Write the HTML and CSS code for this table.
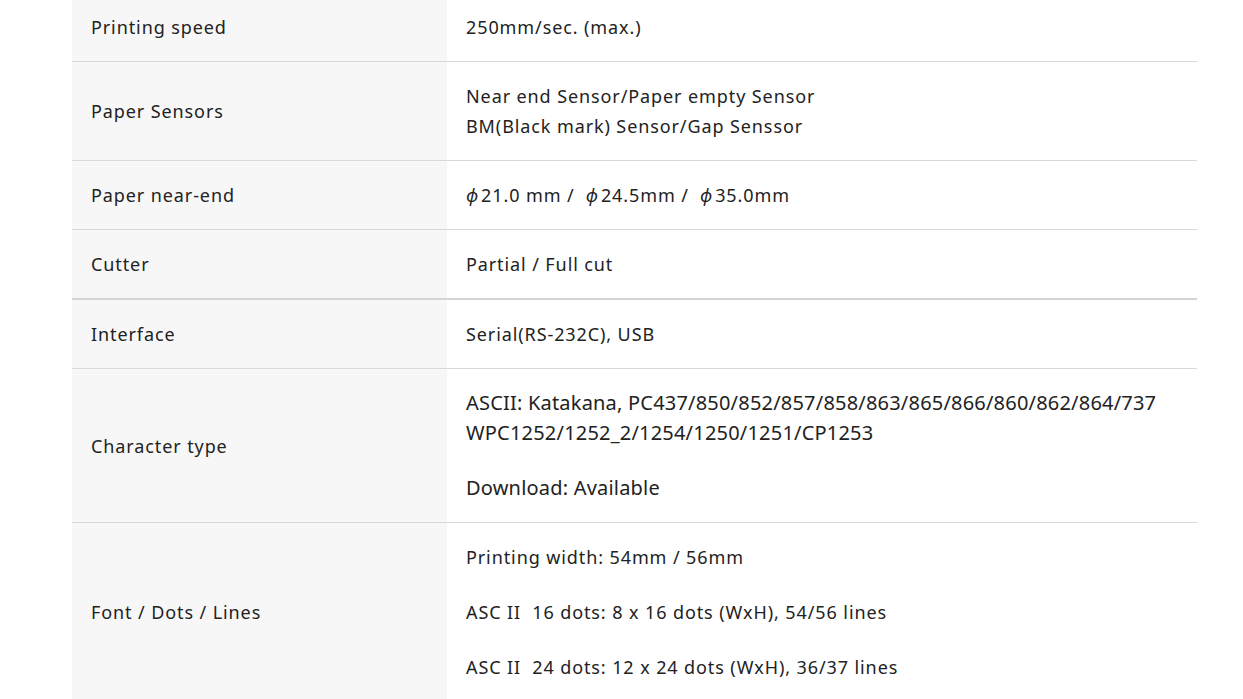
FILE: index.html
```html
<!DOCTYPE html>
<html lang="en">
<head>
    <meta charset="UTF-8">
    <meta name="viewport" content="width=device-width, initial-scale=1.0">
    <title>Specifications</title>
    <link rel="stylesheet" href="styles.css">
</head>
<body>
    <div class="spec">
        <table class="spec-table">
            <tr>
                <th>Printing speed</th>
                <td>250mm/sec. (max.)</td>
            </tr>
            <tr>
                <th>Paper Sensors</th>
                <td>Near end Sensor/Paper empty Sensor<br>BM(Black mark) Sensor/Gap Senssor</td>
            </tr>
            <tr>
                <th>Paper near-end</th>
                <td><span class="phi">ϕ</span>21.0 mm /&nbsp; <span class="phi">ϕ</span>24.5mm /&nbsp; <span class="phi">ϕ</span>35.0mm</td>
            </tr>
            <tr class="section-end">
                <th>Cutter</th>
                <td>Partial / Full cut</td>
            </tr>
            <tr>
                <th>Interface</th>
                <td>Serial(RS-232C), USB</td>
            </tr>
            <tr>
                <th>Character type</th>
                <td class="narrow">
                    <p>ASCII: Katakana, PC437/850/852/857/858/863/865/866/860/862/864/737<br>WPC1252/1252_2/1254/1250/1251/CP1253</p>
                    <p>Download: Available</p>
                </td>
            </tr>
            <tr>
                <th>Font / Dots / Lines</th>
                <td>
                    <p>Printing width: 54mm / 56mm</p>
                    <p>ASC II&nbsp; 16 dots: 8 x 16 dots (WxH), 54/56 lines</p>
                    <p>ASC II&nbsp; 24 dots: 12 x 24 dots (WxH), 36/37 lines</p>
                </td>
            </tr>
        </table>
    </div>
</body>
</html>
```

FILE: styles.css
```css
body {
    margin: 0;
    background-color: #fff;
    font-family: "Noto Sans", sans-serif;
    color: #222;
    overflow: hidden;
}

.spec {
    width: 1125px;
    margin: -7px 0 0 72px;
}

.spec-table {
    width: 100%;
    table-layout: fixed;
    border-collapse: collapse;
    font-size: 18px;
    line-height: 30px;
    letter-spacing: 0.9px;
}

.spec-table th,
.spec-table td {
    padding: 19px 19px;
    text-align: left;
    vertical-align: middle;
    border-bottom: 1px solid #d9d9d9;
}

.spec-table th {
    width: 337px;
    font-weight: normal;
    background-color: #f7f7f7;
}

.spec-table tr.section-end th,
.spec-table tr.section-end td {
    border-bottom: 2px solid #d4d4d4;
}

.spec-table p {
    margin: 0 0 25px;
    white-space: nowrap;
}

.spec-table p:last-child {
    margin-bottom: 0;
}

.phi {
    font-style: italic;
    margin-right: 2px;
}

.spec-table td.narrow {
    font-size: 20px;
    letter-spacing: 0.2px;
}
```
